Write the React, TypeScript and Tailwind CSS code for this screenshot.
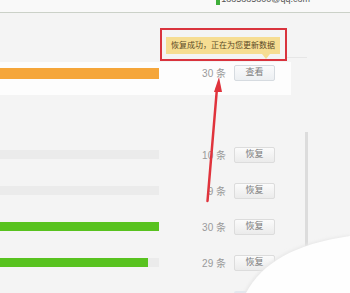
import React from 'react';

const rows = [
  { count: 10, fill: 0 },
  { count: 9, fill: 0 },
  { count: 30, fill: 159 },
  { count: 29, fill: 148 },
];

function Button({ label }: { label: string }) {
  return (
    <div className="w-[41px] h-[16px] flex items-center justify-center rounded-[2px] border border-[#dcdcdc] bg-gradient-to-b from-[#fbfbfb] to-[#ebebeb] text-[9px] text-[#7d7d7d]">
      {label}
    </div>
  );
}

function Count({ n }: { n: number }) {
  return (
    <div className="w-[68px] pr-[1px] text-right text-[10px] text-[#9a9a9a]">
      {n} 条
    </div>
  );
}

export default function App() {
  return (
    <div
      className="relative w-[350px] h-[293px] overflow-hidden bg-[#f4f4f4]"
      style={{ fontFamily: '"Liberation Sans", "Noto Sans CJK SC", sans-serif' }}
    >
      {/* Header */}
      <div className="h-[13px] bg-[#f9f9f9] border-b border-[#cbd1c8] flex justify-end pr-[40px] overflow-hidden">
        <div className="flex items-end gap-[1px] -mt-[7px] h-[12px]">
          <span className="w-[4px] h-[8px] bg-[#3fae3a]" />
          <span className="text-[9px] leading-[12px] text-[#555]">1885885800@qq.com</span>
        </div>
      </div>

      <div className="flex">
        {/* List */}
        <div className="w-[291px]">
          <div className="h-[49px] flex justify-end items-start pt-[24px] pr-[11px]">
            <div className="h-[17px] px-[5px] flex items-center bg-[#f6dd92] text-[8px] text-[#5b4a26]">
              恢复成功，正在为您更新数据
            </div>
          </div>

          {/* Current item card */}
          <div className="h-[33px] bg-[#fdfdfd] pt-[3px]">
            <div className="h-[16px] flex items-center">
              <div className="w-[159px] h-[11px] bg-[#f5a63a]" />
              <Count n={30} />
              <div className="ml-[7px]">
                <button className="w-[41px] h-[16px] flex items-center justify-center rounded-[2px] border border-[#d6dbe0] bg-gradient-to-b from-[#fafbfc] to-[#eceff2] text-[9px] text-[#7d7d7d]">
                  查看
                </button>
              </div>
            </div>
          </div>

          {/* Backup rows */}
          <div className="mt-[42px] flex flex-col">
            {rows.map((r, i) => (
              <div key={i} className="h-[36px] flex items-center">
                <div className="w-[159px] h-[9px] -mt-[2px] bg-[#ebebeb]">
                  {r.fill > 0 && <div className="h-full bg-[#58c21f]" style={{ width: r.fill }} />}
                </div>
                <Count n={r.count} />
                <div className="ml-[7px]">
                  <Button label="恢复" />
                </div>
              </div>
            ))}
            <div className="h-[36px] flex items-center">
              <div className="w-[159px]" />
              <div className="w-[68px]" />
              <div className="ml-[7px] w-[41px] h-[16px] rounded-[2px] bg-[#e3e8ee]" />
            </div>
          </div>
        </div>

        {/* Scrollbar */}
        <div className="ml-[14px] mt-[119px] w-[3px] h-[118px] bg-[#dcdcdc]" />
      </div>

      {/* Faint separator right of the tooltip */}
      <div className="absolute left-[287px] top-[57px] w-[20px] h-px bg-[#e6e6e6]" />

      {/* Red annotation box */}
      <div className="absolute left-[160px] top-[28px] w-[127px] h-[33px] border-2 border-[#d9333d]" />
      <div className="absolute left-[262px] top-[54px] w-0 h-0 border-x-[4px] border-x-transparent border-t-[5px] border-t-[#f6dd92]" />

      {/* Red arrow + white page corner */}
      <svg className="absolute inset-0" width="350" height="293" viewBox="0 0 350 293">
        <line x1="207.5" y1="201" x2="217" y2="88" stroke="#e0333c" strokeWidth="2.5" strokeLinecap="round" />
        <polygon points="219,77 214,92 222,92" fill="#e0333c" />
        <defs>
          <filter id="soft" x="-20%" y="-20%" width="140%" height="140%">
            <feGaussianBlur stdDeviation="1.5" />
          </filter>
        </defs>
        <path d="M244,293 C260,262 292,243 350,235 L350,293 Z" fill="#e8e8e8" filter="url(#soft)" />
        <path d="M246,293 C262,263 294,244 350,236 L350,293 Z" fill="#fefefe" />
      </svg>
    </div>
  );
}
